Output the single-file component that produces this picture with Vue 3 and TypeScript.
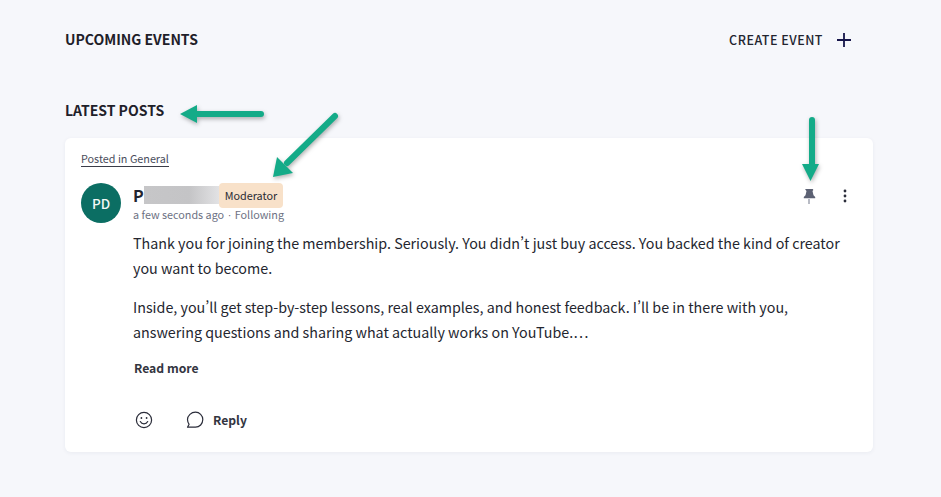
<script setup lang="ts">
const paragraphs = [
  "Thank you for joining the membership. Seriously. You didn’t just buy access. You backed the kind of creator you want to become.",
  "Inside, you’ll get step-by-step lessons, real examples, and honest feedback. I’ll be in there with you, answering questions and sharing what actually works on YouTube.…",
];
</script>

<template>
  <div class="page">
    <header class="top-row">
      <h2 class="section-title">UPCOMING EVENTS</h2>
      <button class="create-btn">
        <span>CREATE EVENT</span>
        <svg class="plus" width="16" height="16" viewBox="0 0 16 16" aria-hidden="true">
          <path d="M8 1v14M1 8h14" stroke="#16154a" stroke-width="1.8" fill="none" />
        </svg>
      </button>
    </header>

    <h2 class="section-title latest">LATEST POSTS</h2>

    <article class="card">
      <a class="posted-in">Posted in General</a>

      <div class="author-row">
        <div class="avatar">PD</div>
        <div class="author-info">
          <div class="name-line">
            <span class="name">P</span>
            <span class="name-blur"></span>
            <span class="badge">Moderator</span>
          </div>
          <div class="meta">a few seconds ago<span class="dot">·</span>Following</div>
        </div>
        <div class="post-actions">
          <svg class="pin" width="16" height="18" viewBox="0 0 16 18" aria-hidden="true">
            <path d="M4.200 2h7.600l.6 1-.9 1 1 4.200 1.700 1.800v1.200H2.800V10l1.700-1.800 1-4.200-.9-1z" fill="#5c6173" />
            <path d="M8 12v5" stroke="#9a9eac" stroke-width="1.4" />
          </svg>
          <svg width="4" height="14" viewBox="0 0 4 14" aria-hidden="true">
            <circle cx="2" cy="2" r="1.400" fill="#2b2d3a" />
            <circle cx="2" cy="7" r="1.400" fill="#2b2d3a" />
            <circle cx="2" cy="12" r="1.400" fill="#2b2d3a" />
          </svg>
        </div>
      </div>

      <div class="body">
        <p v-for="text in paragraphs" :key="text">{{ text }}</p>
        <button class="read-more">Read more</button>
      </div>

      <footer class="card-foot">
        <svg width="18" height="18" viewBox="0 0 18 18" fill="none" stroke="#2b2d3a" stroke-width="1.2" aria-hidden="true">
          <circle cx="9" cy="9" r="7.600" />
          <circle cx="6.400" cy="7" r="0.9" fill="#2b2d3a" stroke="none" />
          <circle cx="11.600" cy="7" r="0.9" fill="#2b2d3a" stroke="none" />
          <path d="M5.300 10.600c.8 1.600 2.100 2.300 3.700 2.300s2.900-.7 3.700-2.300" stroke-linecap="round" />
        </svg>
        <button class="reply">
          <svg width="18" height="18" viewBox="0 0 18 18" fill="none" stroke="#2b2d3a" stroke-width="1.2" aria-hidden="true">
            <path d="M9.500 1.200c4 0 7.300 3.200 7.300 7.400s-3.300 7.600-7.300 7.600H1.500l1.600-2.900C2 11.800 1.500 10.300 1.500 8.600c0-4.200 3.800-7.400 8-7.400z" stroke-linejoin="round" />
          </svg>
          <span>Reply</span>
        </button>
      </footer>
    </article>

    <!-- green annotation arrows drawn over the screenshot -->
    <svg class="arrows" width="941" height="497" viewBox="0 0 941 497" aria-hidden="true">
      <g stroke="#14ab88" stroke-width="6" stroke-linecap="round" fill="none">
        <path d="M195 114h66" />
        <path d="M335 116 L287 163" />
        <path d="M812 120 V166" />
      </g>
      <g fill="#14ab88">
        <path d="M180 114l17-9v18z" />
        <path d="M273 177l4-20 16 16z" />
        <path d="M802 164h17l-8.500 17z" />
      </g>
    </svg>
  </div>
</template>

<style>
html,
body {
  margin: 0;
  background: #f6f7fb;
}
</style>

<style scoped>
.page {
  position: relative;
  box-sizing: border-box;
  width: 941px;
  height: 497px;
  padding: 28px 68px 0 65px;
  overflow: hidden;
  font-family: "Noto Sans CJK SC", "Noto Sans", sans-serif;
  font-feature-settings: "pwid";
  color: #22242f;
  background: #f6f7fb;
}

.top-row {
  display: flex;
  align-items: center;
  justify-content: space-between;
  height: 22px;
  padding-right: 21px;
}

.section-title {
  margin: 0;
  font-size: 14px;
  line-height: 22px;
  font-weight: 700;
  color: #1e2029;
}

.latest {
  margin-top: 49px;
}

.create-btn {
  display: flex;
  align-items: center;
  gap: 13px;
  padding: 0;
  border: 0;
  background: none;
  font: inherit;
  font-size: 12.5px;
  font-weight: 500;
  letter-spacing: 0.5px;
  color: #22242f;
}

.plus {
  margin-top: 2px;
}

.card {
  margin-top: 17px;
  height: 314px;
  box-sizing: border-box;
  padding: 13px 16px 0;
  background: #fff;
  border-radius: 6px;
  box-shadow: 0 1px 4px rgba(40, 50, 90, 0.06);
}

.posted-in {
  display: block;
  width: fit-content;
  font-size: 10.8px;
  line-height: 15px;
  color: #4a4d5c;
  border-bottom: 1px solid #3a3c48;
}

.author-row {
  display: flex;
  align-items: flex-start;
  margin-top: 16px;
}

.avatar {
  display: flex;
  align-items: center;
  justify-content: center;
  flex: none;
  width: 40px;
  height: 40px;
  border-radius: 50%;
  background: #0b6e63;
  color: #f2f8f6;
  font-size: 13.5px;
  font-weight: 500;
}

.author-info {
  margin-left: 12px;
}

.name-line {
  display: flex;
  align-items: center;
  height: 24px;
}

.name {
  font-size: 16px;
  font-weight: 700;
  line-height: 22px;
}

.name-blur {
  width: 75px;
  height: 18px;
  background: linear-gradient(90deg, #c6c6c8 0%, #c4c4c6 60%, #e2e2e4 100%);
}

.badge {
  box-sizing: border-box;
  height: 25px;
  padding: 0 6px;
  border-radius: 4px;
  background: #f8e1c9;
  font-size: 10.8px;
  line-height: 24px;
  color: #2a2b34;
}

.meta {
  font-size: 10.8px;
  line-height: 15px;
  color: #6d7183;
}

.dot {
  margin: 0 3.5px;
  font-family: "Liberation Sans", sans-serif;
}

.post-actions {
  display: flex;
  align-items: center;
  gap: 26px;
  margin: 4px 10px 0 auto;
}

.body {
  margin: 8px 10px 0 52px;
}

.body p {
  margin: 0 0 15px;
  font-size: 14.3px;
  line-height: 24.5px;
  color: #24262f;
}

.read-more {
  display: block;
  margin: 11px 0 0 1px;
  padding: 0;
  border: 0;
  background: none;
  font: inherit;
  font-size: 12.2px;
  line-height: 18px;
  font-weight: 700;
  color: #33353f;
}

.card-foot {
  display: flex;
  align-items: center;
  gap: 33px;
  margin: 34px 0 0 54px;
}

.reply {
  display: flex;
  align-items: center;
  gap: 9px;
  padding: 0;
  border: 0;
  background: none;
  font: inherit;
  font-size: 12.2px;
  font-weight: 700;
  line-height: 18px;
  color: #33353f;
}

.arrows {
  position: absolute;
  left: 0;
  top: 0;
  pointer-events: none;
  filter: drop-shadow(1px 2px 2px rgba(0, 0, 0, 0.3));
}
</style>
